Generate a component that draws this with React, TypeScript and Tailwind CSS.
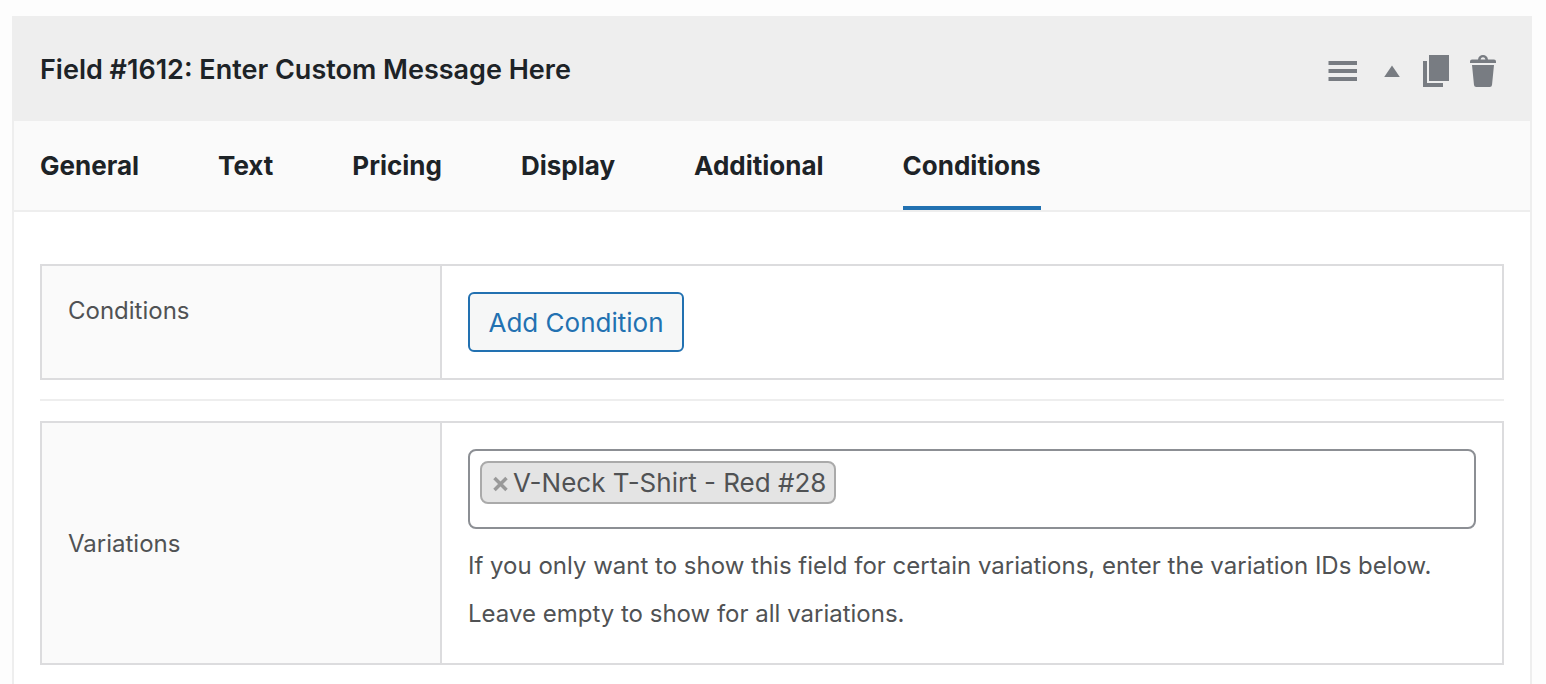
import { useState } from 'react'

const tabs = ['General', 'Text', 'Pricing', 'Display', 'Additional', 'Conditions']

function MenuIcon() {
  return (
    <svg width="30" height="32" viewBox="0 0 30 32" fill="currentColor" aria-hidden="true">
      <path d="M.5 6h28.500v4H.5zM.5 14h28.500v4H.5zM.5 22h28.500v4H.5z" />
    </svg>
  )
}

function CaretIcon() {
  return (
    <svg width="16" height="32" viewBox="0 0 16 32" fill="currentColor" aria-hidden="true">
      <path d="M8 10.500l7.800 11.500H.2z" />
    </svg>
  )
}

function CopyIcon() {
  return (
    <svg width="28" height="32" viewBox="0 0 28 32" fill="currentColor" aria-hidden="true">
      <path d="M7 0h20v26H7zM1 6h4v22h16v4H1z" />
    </svg>
  )
}

function TrashIcon() {
  return (
    <svg width="26" height="32" viewBox="0 0 26 32" fill="currentColor" aria-hidden="true">
      <path d="M8 4.500C8.400 1.700 10.300 0 13 0s4.600 1.700 5 4.500h6q2 0 2 2V8H0V6.500q0-2 2-2zm2.600 0h4.800C15 3 14.200 2.200 13 2.200S11 3 10.600 4.500zM2 10h22l-2 20q-.2 2-2.200 2H6.200Q4.200 32 4 30z" />
    </svg>
  )
}

export default function App() {
  const [active, setActive] = useState('Conditions')
  const [variations, setVariations] = useState(['V-Neck T-Shirt - Red #28'])

  return (
    <div className="min-h-screen bg-[#fdfdfd] pt-4 pr-3.5 pl-3 font-['Inter','Liberation_Sans',sans-serif] text-[#505254]">
      <section className="flex min-h-[calc(100vh-16px)] flex-col border-x-2 border-[#eee] bg-white">
        <header className="flex items-start justify-between bg-[#eee] pt-[39px] pr-[34px] pb-[34px] pl-[26px] text-[#1d2327]">
          <h2 className="text-[27px] leading-[30px] font-semibold">Field #1612: Enter Custom Message Here</h2>
          <div className="flex items-center text-[#787c82]">
            <button type="button" aria-label="Reorder field"><MenuIcon /></button>
            <button type="button" aria-label="Collapse field" className="ml-[26px]"><CaretIcon /></button>
            <button type="button" aria-label="Duplicate field" className="ml-[22px]"><CopyIcon /></button>
            <button type="button" aria-label="Delete field" className="ml-5"><TrashIcon /></button>
          </div>
        </header>

        <nav className="flex gap-[79px] border-b-2 border-[#eee] bg-[#fafafa] px-[26px]">
          {tabs.map((tab) => (
            <button
              key={tab}
              type="button"
              onClick={() => setActive(tab)}
              className={`border-b-4 pt-7 pb-6 text-[26px] leading-[33px] font-bold text-[#1d2327] ${
                tab === active ? 'border-[#2271b1]' : 'border-transparent'
              }`}
            >
              {tab}
            </button>
          ))}
        </nav>

        <div className="px-[26px] pt-[52px] pb-5">
          <div className="flex border-2 border-[#dcdcde]">
            <div className="w-[400px] shrink-0 border-r-2 border-[#dcdcde] bg-[#fafafa] px-[26px] pt-[29px] text-2xl">
              Conditions
            </div>
            <div className="flex-1 p-[26px]">
              <button
                type="button"
                className="block h-[60px] w-54 rounded-md border-2 border-[#2271b1] bg-[#f6f7f7] pt-0.5 text-[26px] leading-8 whitespace-nowrap text-[#2271b1]"
              >
                Add Condition
              </button>
            </div>
          </div>

          <hr className="mt-[19px] mb-5 border-t-2 border-[#eee]" />

          <div className="flex border-2 border-[#dcdcde]">
            <div className="flex w-[400px] shrink-0 items-center border-r-2 border-[#dcdcde] bg-[#fafafa] px-[26px] pt-0.5 text-2xl">
              <label htmlFor="variations">Variations</label>
            </div>
            <div className="min-w-0 flex-1 px-[26px] pt-[26px] pb-[25px]">
              <div className="flex h-20 items-start gap-2 rounded-lg border-2 border-[#8c8f94] bg-white p-2.5">
                {variations.map((name) => (
                  <span
                    key={name}
                    className="flex shrink-0 items-center gap-1 rounded-lg border-2 border-[#aaa] bg-[#e4e4e4] pr-2 pl-2.5 text-[26px] leading-[39px]"
                  >
                    <button
                      type="button"
                      aria-label={`Remove ${name}`}
                      onClick={() => setVariations(variations.filter((item) => item !== name))}
                      className="text-[#999]"
                    >
                      <svg width="17" height="18" viewBox="0 0 17 18" stroke="currentColor" strokeWidth="3.500" aria-hidden="true">
                        <path d="M2.500 4l12 12M14.500 4l-12 12" />
                      </svg>
                    </button>
                    {name}
                  </span>
                ))}
                <input id="variations" type="text" className="h-10 min-w-0 flex-1 text-[26px] outline-none" />
              </div>
              <p className="mt-[13px] text-2xl leading-[48px]">
                If you only want to show this field for certain variations, enter the variation IDs below.
                <br />
                Leave empty to show for all variations.
              </p>
            </div>
          </div>
        </div>
      </section>
    </div>
  )
}
